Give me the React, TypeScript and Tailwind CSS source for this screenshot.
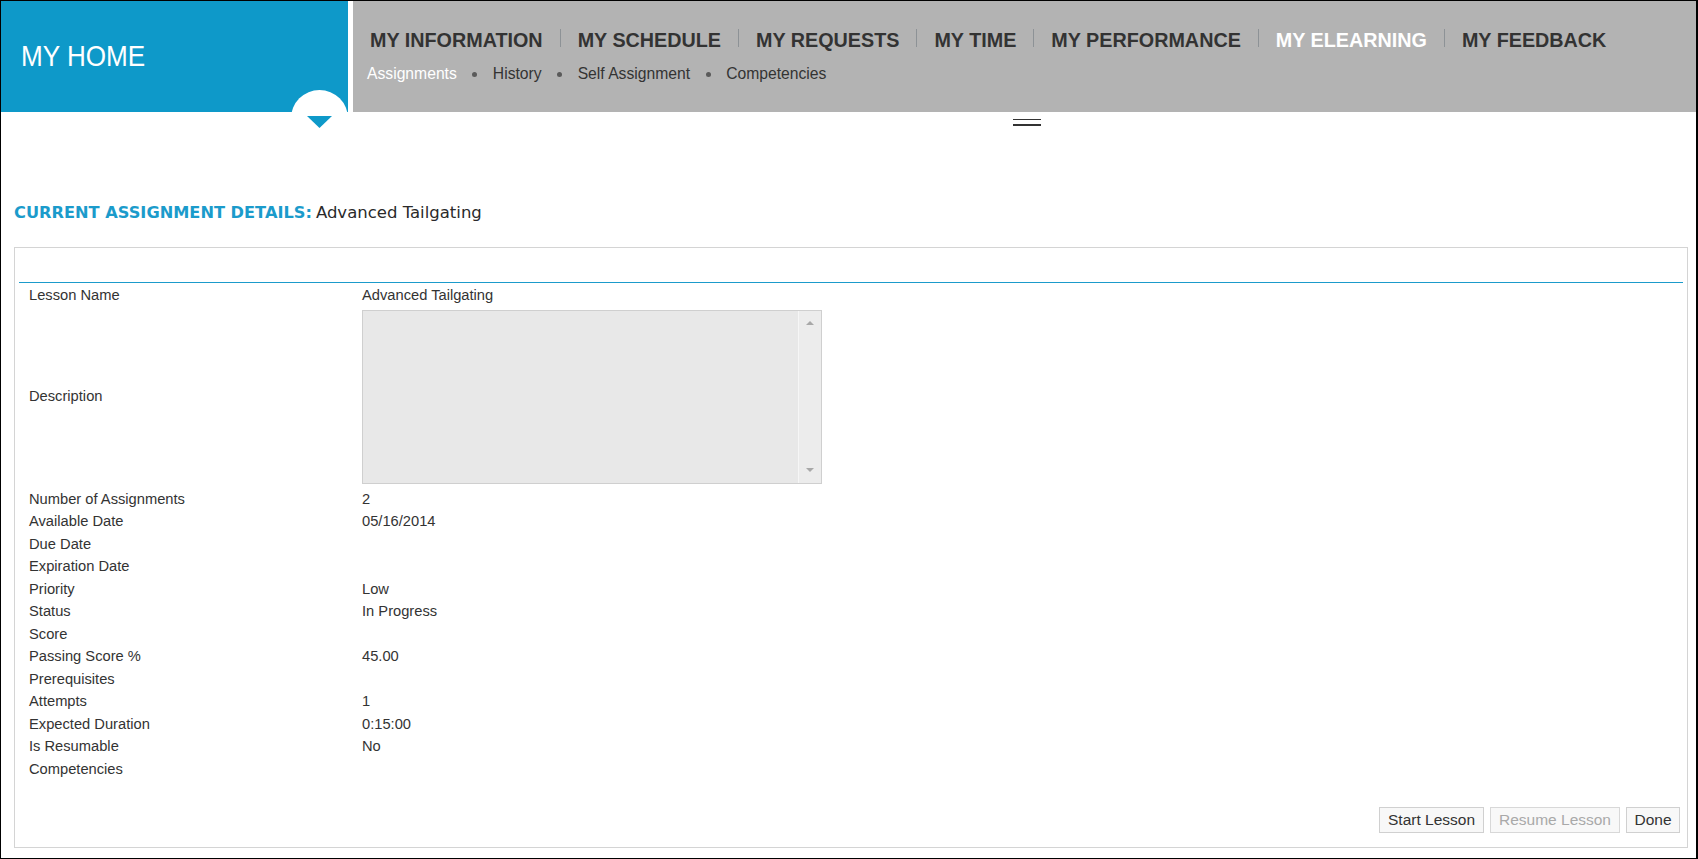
import React, { Fragment } from "react";

const navs = [
  "MY INFORMATION",
  "MY SCHEDULE",
  "MY REQUESTS",
  "MY TIME",
  "MY PERFORMANCE",
  "MY ELEARNING",
  "MY FEEDBACK",
];
const subs = ["Assignments", "History", "Self Assignment", "Competencies"];

const rows: [string, string][] = [
  ["Number of Assignments", "2"],
  ["Available Date", "05/16/2014"],
  ["Due Date", ""],
  ["Expiration Date", ""],
  ["Priority", "Low"],
  ["Status", "In Progress"],
  ["Score", ""],
  ["Passing Score %", "45.00"],
  ["Prerequisites", ""],
  ["Attempts", "1"],
  ["Expected Duration", "0:15:00"],
  ["Is Resumable", "No"],
  ["Competencies", ""],
];

export default function App() {
  return (
    <div className="relative w-[1698px] h-[859px] overflow-hidden bg-white border-t border-l border-b border-r-2 border-black font-['Liberation_Sans',Arial,sans-serif] text-[#333]">
      <header className="flex h-[111px]">
        <div className="w-[347px] bg-[#0e99c9] flex items-center pl-[20px]">
          <span className="inline-block origin-left scale-x-[0.9] text-white text-[29px] leading-none">
            MY HOME
          </span>
        </div>
        <div className="ml-[5px] flex-1 bg-[#b3b3b3] pt-[27px]">
          <nav className="flex items-center h-[24px]">
            {navs.map((n, i) => (
              <Fragment key={n}>
                {i > 0 && <span className="w-px h-[18px] -translate-y-[2px] bg-[#8d9296]" />}
                <span
                  className={
                    n === "MY ELEARNING"
                      ? "px-[17px] text-[19.75px] font-bold leading-[24px] text-white"
                      : "px-[17px] text-[19.75px] font-bold leading-[24px] text-[#333]"
                  }
                >
                  {n}
                </span>
              </Fragment>
            ))}
          </nav>
          <div className="mt-[12px] flex items-center pl-[14px] h-[20px] text-[15.7px] leading-[20px]">
            {subs.map((s, i) => (
              <Fragment key={s}>
                {i > 0 && <span className="mx-[15.5px] w-[5px] h-[5px] rounded-full bg-[#5a5a5a]" />}
                <span className={i === 0 ? "text-white" : "text-[#333]"}>{s}</span>
              </Fragment>
            ))}
          </div>
        </div>
      </header>

      <div className="absolute left-[290px] top-[89px] w-[57px] h-[57px] rounded-full bg-white" />
      <svg className="absolute left-[306px] top-[115px]" width="25" height="12" viewBox="0 0 25 12">
        <polygon points="0,0 25,0 12.5,12" fill="#0e99c9" />
      </svg>

      <div className="pl-[1012px] pt-[7px]">
        <div className="w-[28px] h-px bg-[#333]" />
        <div className="mt-[4px] w-[28px] h-[2px] bg-[#333]" />
      </div>

      <h1 className="mt-[77px] pl-[13px] leading-[20px] font-['DejaVu_Sans',Verdana,sans-serif] font-normal flex items-center">
        <span className="font-bold text-[16.2px] text-[#1b9bcb]">CURRENT ASSIGNMENT DETAILS:</span>
        <span className="ml-[4px] text-[16.5px] text-[#2a2a2a]">Advanced Tailgating</span>
      </h1>

      <section className="mt-[24px] ml-[13px] w-[1674px] h-[601px] border border-[#d4d4d4] flex flex-col">
        <div className="h-[34px]" />
        <div className="mx-[4px] h-px bg-[#1b9bcb]" />
        <div className="mx-[4px] pl-[10px] text-[14.7px] text-[#333]">
          <div className="flex items-center h-[23px] pt-px">
            <span className="w-[333px]">Lesson Name</span>
            <span>Advanced Tailgating</span>
          </div>
          <div className="flex items-center pt-[3.5px] pb-[4px]">
            <span className="w-[333px]">Description</span>
            <div className="w-[460px] h-[174px] border border-[#cfcfcf] bg-[#e8e8e8] flex">
              <div className="flex-1" />
              <div className="w-[23px] bg-[#ececec] border-l border-[#f6f6f6] flex flex-col items-center justify-between pt-[10px] pb-[11px]">
                <svg width="8" height="4" viewBox="0 0 8 4">
                  <polygon points="0,4 8,4 4,0" fill="#a8a8a8" />
                </svg>
                <svg width="8" height="4" viewBox="0 0 8 4">
                  <polygon points="0,0 8,0 4,4" fill="#a8a8a8" />
                </svg>
              </div>
            </div>
          </div>
          {rows.map(([l, v]) => (
            <div key={l} className="flex items-center h-[22.5px]">
              <span className="w-[333px]">{l}</span>
              <span>{v}</span>
            </div>
          ))}
        </div>
        <div className="mt-auto flex justify-end gap-[6px] pr-[7px] pb-[14px] text-[15.5px]">
          <button className="w-[105px] h-[26px] border border-[#d0d0d0] bg-[#f8f8f8] text-[#333]">Start Lesson</button>
          <button className="w-[130px] h-[26px] border border-[#d8d8d8] bg-[#f8f8f8] text-[#a9a9a9]">Resume Lesson</button>
          <button className="w-[54px] h-[26px] border border-[#d0d0d0] bg-[#f8f8f8] text-[#333]">Done</button>
        </div>
      </section>
    </div>
  );
}
